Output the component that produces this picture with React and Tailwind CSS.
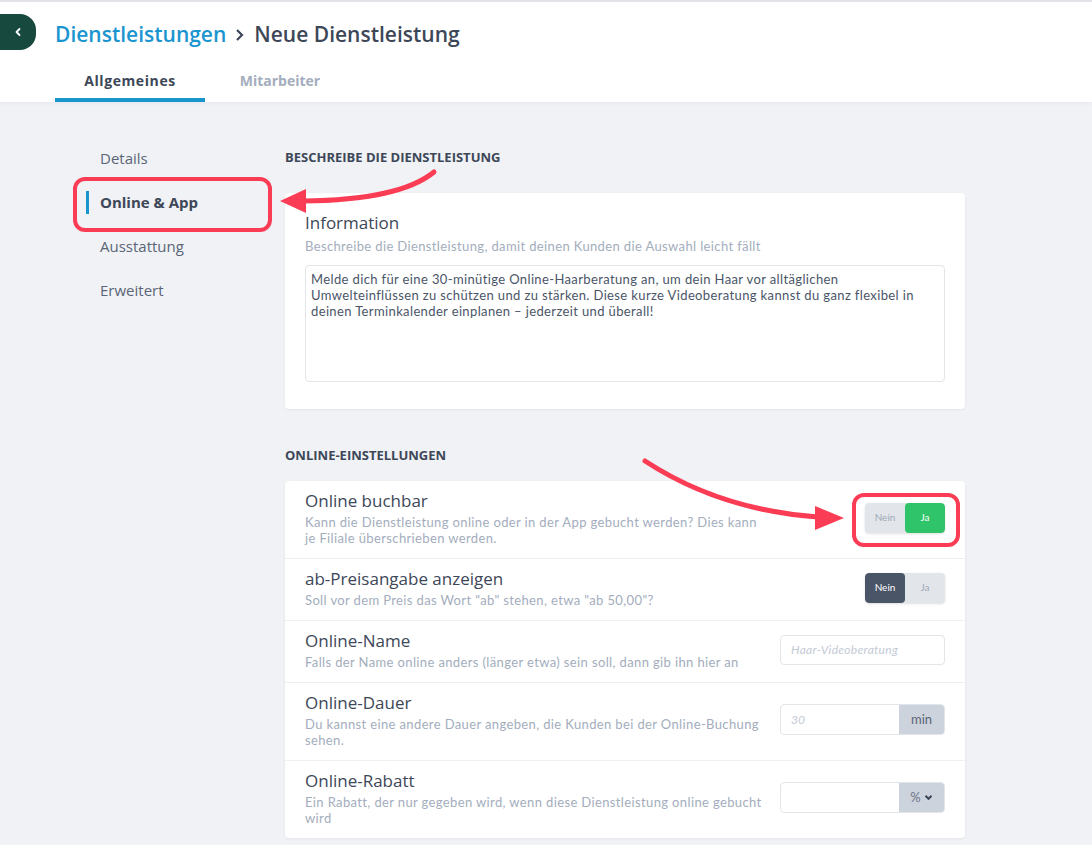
import React from 'react'

const heading = { fontFamily: '"Open Sans", "Noto Sans", sans-serif' }

const Toggle = ({ value }) => (
  <div className="flex h-[30px] w-[80px] rounded overflow-hidden bg-[#e2e6ea] text-[10px] shadow-sm">
    <div className={`flex-1 flex items-center justify-center rounded ${value ? 'text-[#a0aab8]' : 'bg-[#4a5568] text-white'}`}>Nein</div>
    <div className={`flex-1 flex items-center justify-center rounded ${value ? 'bg-[#2fc46a] text-white' : 'text-[#a0aab8]'}`}>Ja</div>
  </div>
)

const Row = ({ title, desc, children, last }) => (
  <div className={`flex items-center justify-between px-5 pt-[9px] pb-[12px] ${last ? '' : 'border-b border-[#eef0f3]'}`}>
    <div className="max-w-[460px]">
      <div className="text-[17px] leading-[21px] font-medium text-[#3d4758]" style={heading}>{title}</div>
      <div className="mt-[3px] text-[13px] leading-[16px] tracking-[0.37px] text-[#a3adbd]">{desc}</div>
    </div>
    {children}
  </div>
)

const App = () => {
  const nav = ['Details', 'Online & App', 'Ausstattung', 'Erweitert']
  return (
    <div className="relative min-h-screen bg-[#f0f2f6]" style={{ fontFamily: 'Lato, "Noto Sans", sans-serif' }}>
      <header className="bg-white border-t-2 border-[#e1e3e6] shadow-[0_2px_4px_rgba(0,0,0,0.04)]">
        <div className="flex items-center pt-[11px]">
          <button className="w-9 h-9 rounded-r-2xl bg-[#17493f] flex items-center justify-center text-white">
            <svg width="10" height="10" viewBox="0 0 10 10"><path d="M6.5 2 L3.5 5 L6.5 8" stroke="white" strokeWidth="1.8" fill="none" strokeLinecap="round" strokeLinejoin="round" /></svg>
          </button>
          <h1 className="ml-[19px] pt-[6px] text-[21px] font-semibold flex items-center gap-2" style={heading}>
            <span className="text-[#1a95cf]">Dienstleistungen</span>
            <svg width="12" height="14" viewBox="0 0 12 14"><path d="M3 2 L8 7 L3 12" stroke="#3d4758" strokeWidth="2.2" fill="none" /></svg>
            <span className="text-[#3d4758]">Neue Dienstleistung</span>
          </h1>
        </div>
        <div className="flex ml-[55px] mt-[19px] text-[14px] font-bold" style={heading}>
          <div className="w-[150px] text-center pb-[7px] border-b-4 border-[#1896cc] text-[#3d4758] tracking-[0.6px]">Allgemeines</div>
          <div className="w-[150px] text-center pb-[7px] border-b-4 border-transparent text-[#a3adbd]">Mitarbeiter</div>
        </div>
      </header>

      <div className="flex">
        <nav className="w-[285px] pl-[86px] pt-[35px] text-[15px]" style={heading}>
          {nav.map((n) => (
            <div key={n} className="h-11 flex items-center">
              {n === 'Online & App' ? (
                <div className="flex items-center h-[23px] border-l-[3px] border-[#1896cc] pl-[11px] font-bold text-[#3d4758]">{n}</div>
              ) : (
                <div className="pl-[14px] text-[#5a6577]">{n}</div>
              )}
            </div>
          ))}
        </nav>

        <main className="w-[680px] pt-[47px] pb-[10px]">
          <h2 className="text-[13px] leading-4 font-bold text-[#3d4758] uppercase" style={heading}>Beschreibe die Dienstleistung</h2>
          <div className="mt-[28px] bg-white rounded shadow-[0_1px_3px_rgba(0,0,0,0.06)] px-5 pt-[19px] pb-[27px]">
            <div className="text-[17px] leading-[22px] font-medium text-[#3d4758]" style={heading}>Information</div>
            <div className="mt-[3px] text-[13px] leading-[18px] tracking-[0.37px] text-[#a3adbd]">Beschreibe die Dienstleistung, damit deinen Kunden die Auswahl leicht fällt</div>
            <div className="mt-[10px] h-[117px] border border-[#e2e6ea] rounded px-[5px] py-[5px] text-[13px] leading-[16px] tracking-[0.37px] text-[#4a5568]">
              Melde dich für eine 30-minütige Online-Haarberatung an, um dein Haar vor alltäglichen Umwelteinflüssen zu schützen und zu stärken. Diese kurze Videoberatung kannst du ganz flexibel in deinen Terminkalender einplanen – jederzeit und überall!
            </div>
          </div>

          <h2 className="mt-[38px] text-[13px] leading-4 font-bold text-[#3d4758] uppercase" style={heading}>Online-Einstellungen</h2>
          <div className="mt-[18px] bg-white rounded shadow-[0_1px_3px_rgba(0,0,0,0.06)]">
            <Row title="Online buchbar" desc="Kann die Dienstleistung online oder in der App gebucht werden? Dies kann je Filiale überschrieben werden.">
              <Toggle value={true} />
            </Row>
            <Row title="ab-Preisangabe anzeigen" desc={'Soll vor dem Preis das Wort "ab" stehen, etwa "ab 50,00"?'}>
              <Toggle value={false} />
            </Row>
            <Row title="Online-Name" desc="Falls der Name online anders (länger etwa) sein soll, dann gib ihn hier an">
              <div className="w-[165px] h-[30px] border border-[#e2e6ea] rounded flex items-center px-[10px] text-[12px] italic tracking-[0.3px] text-[#c3cad6]">Haar-Videoberatung</div>
            </Row>
            <Row title="Online-Dauer" desc="Du kannst eine andere Dauer angeben, die Kunden bei der Online-Buchung sehen.">
              <div className="flex w-[165px] h-[31px] border border-[#e2e6ea] rounded overflow-hidden text-[12px]">
                <div className="flex-1 flex items-center px-[10px] italic text-[#c3cad6]">30</div>
                <div className="w-[45px] bg-[#cdd3dd] flex items-center justify-center text-[#5a6577] text-[13px]">min</div>
              </div>
            </Row>
            <Row title="Online-Rabatt" desc="Ein Rabatt, der nur gegeben wird, wenn diese Dienstleistung online gebucht wird" last>
              <div className="flex w-[165px] h-[31px] border border-[#e2e6ea] rounded overflow-hidden text-[12px]">
                <div className="flex-1" />
                <div className="w-[45px] bg-[#cdd3dd] flex items-center justify-center gap-[3px] text-[#6b7587] text-[13px]">
                  %
                  <svg width="9" height="7" viewBox="0 0 9 7"><path d="M1.5 1.8 L4.5 4.8 L7.5 1.8" stroke="#3d4758" strokeWidth="2" fill="none" /></svg>
                </div>
              </div>
            </Row>
          </div>
        </main>
      </div>

      {/* annotations */}
      <div className="absolute left-[73px] top-[177px] w-[199px] h-[55px] border-[4px] border-[#fb3c55] rounded-xl pointer-events-none" />
      <div className="absolute left-[852px] top-[493px] w-[108px] h-[54px] border-[4px] border-[#fb3c55] rounded-xl pointer-events-none" />
      <svg className="absolute left-0 top-0 pointer-events-none" width="1092" height="845">
        <path d="M434 172 Q 400 200 303 201" stroke="#fb3c55" strokeWidth="5" fill="none" strokeLinecap="round" />
        <polygon points="280,201 306,189 306,213" fill="#fb3c55" />
        <path d="M645 461 Q 720 510 818 517" stroke="#fb3c55" strokeWidth="5" fill="none" strokeLinecap="round" />
        <polygon points="844,518 815,506 815,530" fill="#fb3c55" />
      </svg>
    </div>
  )
}

export default App
